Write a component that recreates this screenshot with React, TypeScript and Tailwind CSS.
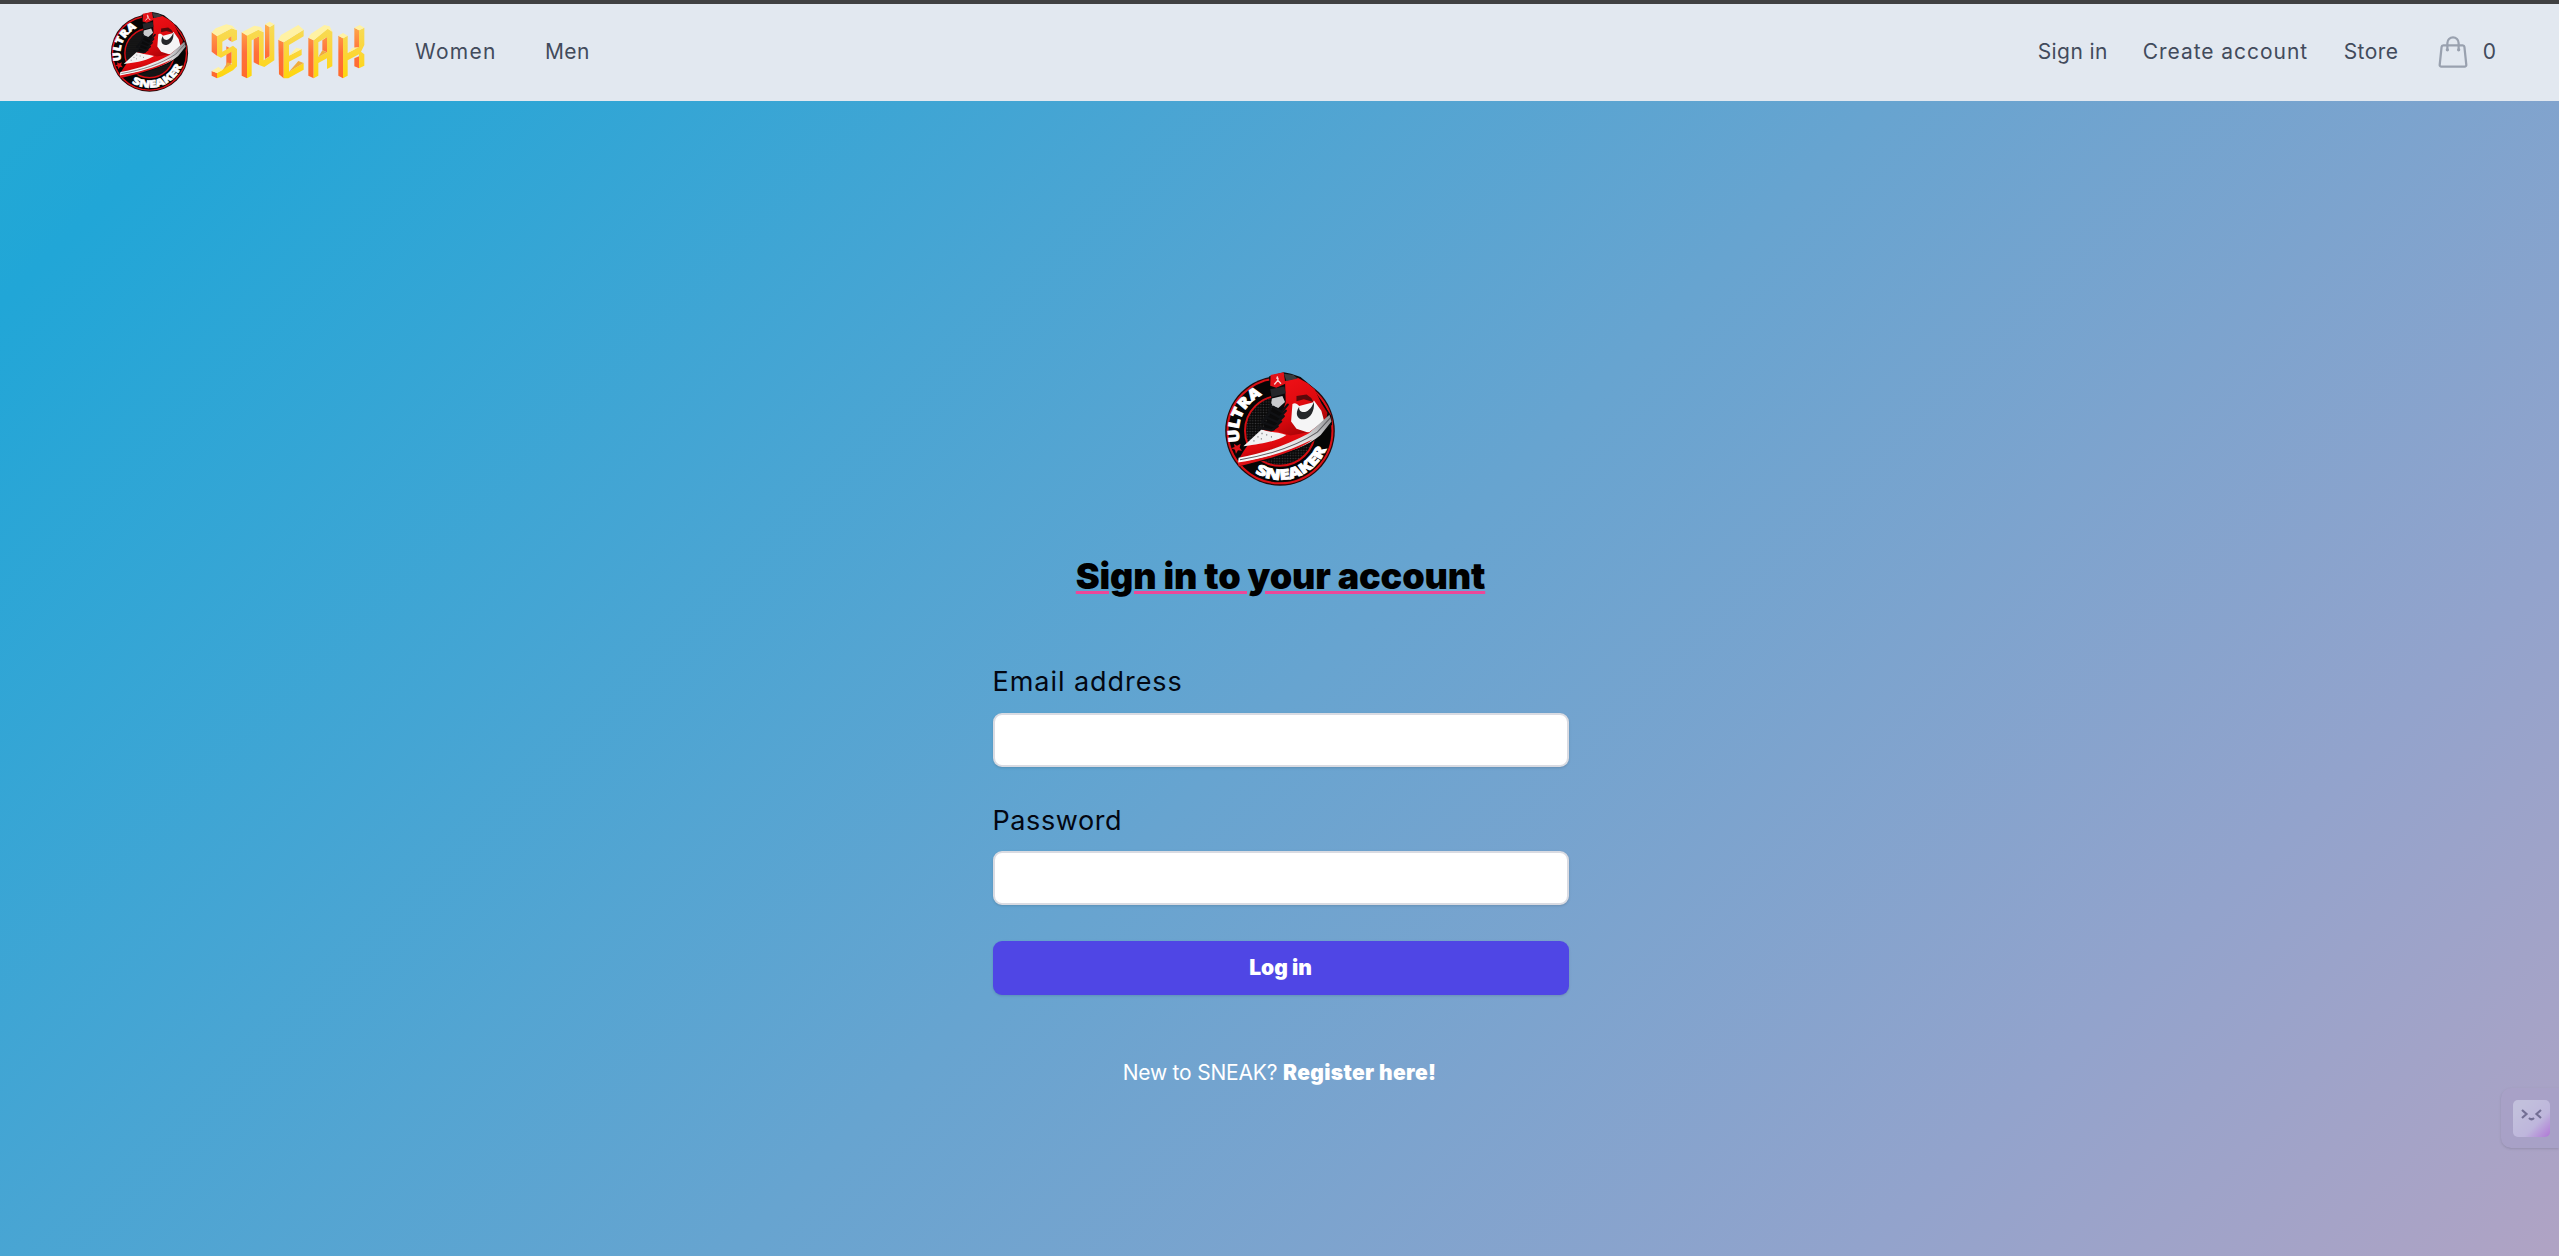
import React from "react";

const BAG =
  "M15.75 10.5V6a3.75 3.75 0 1 0-7.5 0v4.5m11.356-1.993 1.263 12c.07.665-.45 1.243-1.119 1.243H4.25a1.125 1.125 0 0 1-1.12-1.243l1.264-12A1.125 1.125 0 0 1 5.513 7.5h12.974c.576 0 1.059.435 1.119 1.007ZM8.625 10.5a.375.375 0 1 1-.75 0 .375.375 0 0 1 .75 0Zm7.5 0a.375.375 0 1 1-.75 0 .375.375 0 0 1 .75 0Z";

function Badge({ id, className }: { id: string; className: string }) {
  const top = "top-" + id;
  const bottom = "bottom-" + id;
  const red = "red-" + id;
  const sole = "sole-" + id;
  const dots = "dots-" + id;
  return (
    <svg viewBox="0 0 330 342" className={className} role="img" aria-label="Ultra Sneaker">
      <defs>
        <path id={top} d="M46 210 A120 120 0 0 1 150 61" />
        <path id={bottom} d="M91 303 A147 147 0 0 0 308 214" />
        <linearGradient id={red} x1="0" y1="0" x2="0.5" y2="1">
          <stop offset="0" stopColor="#f31218" />
          <stop offset="0.6" stopColor="#dd090e" />
          <stop offset="1" stopColor="#a00205" />
        </linearGradient>
        <linearGradient id={sole} x1="0" y1="1" x2="1" y2="0">
          <stop offset="0" stopColor="#ffffff" />
          <stop offset="0.6" stopColor="#e2e2e4" />
          <stop offset="1" stopColor="#8c8c90" />
        </linearGradient>
        <pattern id={dots} width="8" height="8" patternUnits="userSpaceOnUse">
          <rect width="8" height="8" fill="#090909" />
          <circle cx="4" cy="4" r="2.2" fill="#3c3c3e" />
        </pattern>
      </defs>
      <circle cx="165" cy="178" r="163" fill="#26090a" />
      <circle cx="165" cy="178" r="156" fill="none" stroke="#dc1116" strokeWidth="6" />
      <circle cx="165" cy="178" r="152" fill="#050505" />
      <circle cx="165" cy="178" r="104" fill={`url(#${dots})`} stroke="#d40e13" strokeWidth="6" />
      <path d="M132 16 L176 4 L198 8 L226 18 L246 34 L262 48 L290 92 L318 134 L320 160 L250 222 L140 262 L44 284 L40 262 L62 226 L122 160 L142 108 Z" fill="#0a0a0b" />
      <path d="M180 30 L218 20 L246 36 L268 54 L288 96 L306 124 L300 160 L250 196 L196 206 L140 190 L164 150 L182 92 Z" fill={`url(#${red})`} />
      <path d="M137 12 L176 4 L181 38 L154 50 L136 44 Z" fill="#e31218" />
      <path d="M157 16 L159 28 L168 38 M160 26 L148 40 M161 25 L154 20" stroke="#f9d5d5" strokeWidth="4" fill="none" />
      <path d="M177 8 L205 12 L218 22 L184 30 Z" fill="#3b3b3e" />
      <path d="M136 54 L178 46 L182 66 L140 78 Z" fill="#26262a" />
      <path d="M141 82 L172 74 L180 92 L160 110 L138 102 Z" fill="#c9cacd" />
      <path d="M202 98 C210 94 214 96 222 104 L262 94 L266 88 L288 118 L296 148 L250 184 L214 172 L198 150 Z" fill="#f5f5f6" />
      <path d="M222 106 C206 130 220 148 240 143 C256 138 268 120 266 92 C258 112 246 122 236 122 C226 122 221 116 222 106 Z" fill="#25272a" />
      <path d="M214 74 L244 70 L258 80 L264 92 L236 84 L214 90 Z" fill="#5a090b" />
      <path d="M44 260 C66 222 88 194 118 172 L158 180 L196 192 L262 180 L230 206 L152 230 L42 268 Z" fill={`url(#${red})`} />
      <path d="M56 224 L110 174 C134 182 160 182 184 190 C160 206 122 216 56 224 Z" fill="#f2f2f3" />
      <path d="M86 208 l3 0 M98 196 l3 0 M110 186 l3 0 M108 202 l3 0 M124 190 l3 0 M138 196 l3 0" stroke="#6c6c70" strokeWidth="4" />
      <path d="M42 258 C120 244 190 218 250 186 L312 130 L318 150 L286 190 C230 238 140 252 40 276 Z" fill={`url(#${sole})`} />
      <path d="M46 264 C130 250 214 224 276 182 L314 140" stroke="#5b5b60" strokeWidth="3" fill="none" />
      <path d="M40 272 C110 262 190 240 262 204 C220 238 130 262 42 284 Z" fill="#dd1116" />
      <g stroke="#101114" strokeWidth="7" strokeLinecap="round" fill="none">
        <path d="M100 168 L140 176 L158 164" />
        <path d="M112 152 L150 166 L168 150" />
        <path d="M124 138 L158 152 L176 134" />
        <path d="M134 122 L164 138 L182 118" />
        <path d="M144 106 L170 122 L188 100" />
        <path d="M112 150 L132 128 L138 100" />
      </g>
      <path d="M28 216 L37 222 L48 216 L45 228 L52 237 L40 236 L34 246 L31 234 L20 230 L30 226 Z" fill="#dd1419" />
      <g fill="#fff" stroke="#fff" strokeWidth="2.5" fontFamily="'Open Sans', Inter, sans-serif" fontWeight="800">
        <text fontSize="44">
          <textPath href={`#${top}`} textLength="166" lengthAdjust="spacingAndGlyphs">
            ULTRA
          </textPath>
        </text>
        <text fontSize="43">
          <textPath href={`#${bottom}`} textLength="252" lengthAdjust="spacingAndGlyphs">
            SNEAKER
          </textPath>
        </text>
      </g>
    </svg>
  );
}

/* Left walls, front faces and lit tops of the extruded letters. */
const SIDES = [
  "M2 34 L18 44 L18 104 L2 92 Z M2 150 L18 156 L18 172 L2 164 Z M46 76 L62 84 L62 126 L46 134 Z M62 44 L62 62 L52 56 L52 48 Z",
  "M92 34 L108 42 L108 172 L92 164 Z M128 54 L144 46 L144 132 L128 124 Z M162 10 L176 18 L176 106 L162 114 Z",
  "M202 56 L218 64 L218 172 L204 160 Z",
  "M292 50 L308 58 L308 172 L292 164 Z M334 58 L348 48 L348 94 L334 88 Z",
  "M382 44 L396 52 L396 172 L382 164 Z M430 20 L444 28 L444 80 L430 84 Z M430 112 L444 106 L444 142 L430 136 Z",
];
const FACES = [
  "M18 44 L62 22 L78 28 L78 56 L62 64 L62 46 L34 62 L34 92 L66 74 L78 84 L78 136 L66 148 L34 166 L18 172 L18 156 L62 130 L62 92 L30 110 L18 104 Z",
  "M108 42 L142 26 L158 34 L158 118 L176 106 L176 18 L190 10 L190 118 L160 138 L144 132 L144 46 L122 58 L122 164 L108 172 Z",
  "M218 64 L278 26 L278 46 L234 72 L234 104 L272 84 L272 102 L234 122 L234 152 L278 126 L278 146 L232 172 L218 172 Z",
  "M308 58 L350 22 L364 32 L364 136 L348 144 L348 112 L322 126 L322 164 L308 172 Z M322 64 L322 108 L348 94 L348 48 Z",
  "M396 52 L410 44 L410 96 L444 78 L444 28 L460 20 L460 72 L450 92 L460 100 L460 134 L444 142 L444 100 L410 118 L410 164 L396 172 Z",
];
const TOPS = [
  "M2 34 L14 22 L46 10 L64 14 L78 28 L62 22 L18 46 Z M2 150 L22 138 L36 146 L18 156 Z",
  "M92 34 L130 14 L150 18 L158 34 L142 26 L108 44 Z M162 10 L176 2 L190 10 L176 18 Z",
  "M202 56 L210 42 L262 12 L278 26 L218 64 Z M234 104 L256 80 L272 84 Z",
  "M292 50 L300 38 L340 12 L356 16 L364 32 L350 24 L308 58 Z",
  "M382 44 L396 36 L410 44 L396 52 Z M430 20 L446 12 L460 20 L444 28 Z M410 96 L424 80 L444 78 Z",
];
/* Shaded floors inside the letters. */
const FLOORS = [
  "M36 146 L50 124 L62 130 Z",
  "M234 152 L262 120 L278 126 Z",
  "M322 108 L334 88 L348 94 Z",
];

function WordMark({ className }: { className: string }) {
  return (
    <svg viewBox="0 0 462 174" className={className} role="img" aria-label="SNEAK">
      <defs>
        <linearGradient id="wm-face" x1="0" y1="0" x2="0" y2="174" gradientUnits="userSpaceOnUse">
          <stop offset="0" stopColor="#f6dc5c" />
          <stop offset="0.5" stopColor="#fbd63c" />
          <stop offset="1" stopColor="#ffd60a" />
        </linearGradient>
        <linearGradient id="wm-side" x1="0" y1="0" x2="0" y2="174" gradientUnits="userSpaceOnUse">
          <stop offset="0" stopColor="#ffb54a" />
          <stop offset="0.55" stopColor="#ff6f3c" />
          <stop offset="1" stopColor="#ff6a2a" />
        </linearGradient>
      </defs>
      {SIDES.map((d, i) => (
        <path key={"s" + i} d={d} fill="url(#wm-side)" />
      ))}
      {FACES.map((d, i) => (
        <path key={"f" + i} d={d} fill="url(#wm-face)" fillRule="evenodd" />
      ))}
      {TOPS.map((d, i) => (
        <path key={"t" + i} d={d} fill="#fff2a4" />
      ))}
      {FLOORS.map((d, i) => (
        <path key={"b" + i} d={d} fill="#f0ac3c" />
      ))}
    </svg>
  );
}

export default function App() {
  return (
    <div className="flex h-[1256px] w-full flex-col overflow-hidden bg-[linear-gradient(135deg,#23aad4_0%,#21a6d7_8%,#67a4d0_52%,#93a3cc_82%,#b0a3c4_100%)] font-['Inter',sans-serif]">
      <header className="flex h-[101px] shrink-0 items-center border-t-4 border-[#404142] bg-[#e2e8f0] pl-[110px] text-[21px] leading-[30px] text-[#424b5c]">
        <Badge id="nav" className="-mt-0.5 h-[81px] w-[79px]" />
        <div className="-mt-[6px] ml-[22px]">
          <WordMark className="h-[58px] w-[154px]" />
        </div>
        <nav className="-mt-px ml-[50px] flex">
          <a className="w-[130px] tracking-[1.3px] whitespace-nowrap">Women</a>
          <a className="tracking-[0.4px] whitespace-nowrap">Men</a>
        </nav>
        <nav className="mr-[63px] ml-auto -mt-px flex items-center">
          <a className="w-[105px] tracking-[0.4px] whitespace-nowrap">Sign in</a>
          <a className="w-[201px] tracking-[0.95px] whitespace-nowrap">Create account</a>
          <a className="w-[91px] tracking-[0.4px] whitespace-nowrap">Store</a>
          <svg viewBox="0 0 24 24" className="size-9 text-gray-400" fill="none" stroke="currentColor" strokeWidth="1.5" strokeLinecap="round" strokeLinejoin="round">
            <path d={BAG} />
          </svg>
          <span className="ml-3">0</span>
        </nav>
      </header>

      <main className="relative flex grow flex-col items-center pt-[270px]">
        <Badge id="main" className="h-[115px] w-[112px]" />
        <h1 className="mt-[63px] ml-[2px] text-[36px] leading-[54px] font-black tracking-[-0.15px] whitespace-nowrap text-black underline decoration-[#ec4899] decoration-[3px] underline-offset-[2px]">
          Sign in to your account
        </h1>
        <form className="mt-[62px] ml-[2px] flex w-[576px] flex-col">
          <label className="-mt-px text-[27px] leading-9 tracking-[0.95px] text-gray-950">Email address</label>
          <input className="mt-[13px] h-[54px] rounded-[9px] border-2 border-[#d9dbe2] bg-white shadow-sm" />
          <label className="mt-9 text-[27px] leading-9 tracking-[0.6px] text-gray-950">Password</label>
          <input type="password" className="mt-3 h-[54px] rounded-[9px] border-2 border-[#d9dbe2] bg-white shadow-sm" />
          <button type="button" className="mt-9 h-[54px] rounded-[9px] bg-[#4f46e5] text-[21px] font-black tracking-[0px] text-white shadow-sm">
            Log in
          </button>
        </form>
        <p className="mt-[60px] text-[21px] leading-9 tracking-[-0.2px] whitespace-nowrap text-white">
          New to SNEAK? <a className="font-black tracking-[0.35px]">Register here!</a>
        </p>
        <aside className="absolute top-[987px] right-0 h-[60px] w-[58px] rounded-l-[10px] bg-[#a8a1c7] pt-[12px] pl-[12px] shadow-sm">
          <svg viewBox="0 0 37 37" className="size-[37px]">
            <defs>
              <linearGradient id="face" x1="0.2" y1="0.2" x2="1" y2="1">
                <stop offset="0" stopColor="#c2c0dc" />
                <stop offset="0.55" stopColor="#beb6dc" />
                <stop offset="1" stopColor="#b077d6" />
              </linearGradient>
            </defs>
            <rect width="37" height="37" rx="5" fill="url(#face)" />
            <path d="M9 10 L13.500 14 L9 18 M28 10 L23.500 14 L28 18 M16 18 Q18.500 20.500 21 18" stroke="#736f94" strokeWidth="2.200" fill="none" />
          </svg>
        </aside>
      </main>
    </div>
  );
}
